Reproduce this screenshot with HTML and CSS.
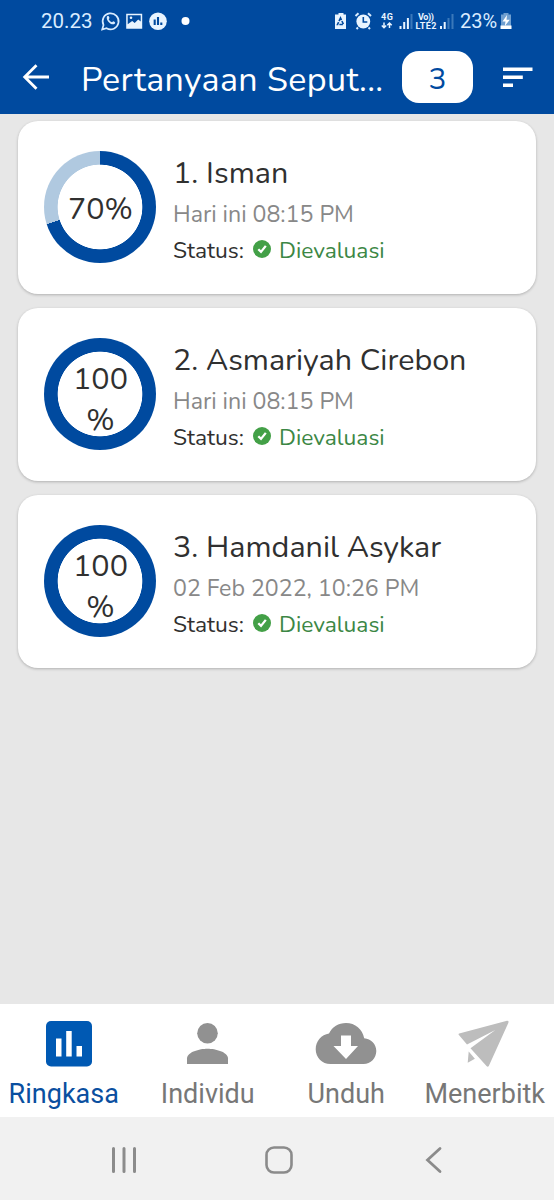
FILE: index.html
```html
<!DOCTYPE html>
<html lang="id">
<head>
<meta charset="utf-8">
<title>Pertanyaan</title>
<link rel="stylesheet" href="styles.css">
</head>
<body>
<div class="screen">
  <header class="header">
    <div class="status-bar">
      <span class="clock">20.23</span>
      <svg class="status-left" width="92" height="24" viewBox="0 0 92 24" fill="none">
        <path d="M2.200 20.500 3.500 16A8 8 0 1 1 6.500 19.200Z" stroke="#d9ecff" stroke-width="1.700"/>
        <path d="M7 7.500c1-1.200 1.800-.7 2.500 1.500l-.8 1.200c.8 1.500 1.900 2.500 3.300 3.100l1.200-1c2 .8 2.500 1.400 1.500 2.500-2.800 2.300-9.300-3-7.700-7.300Z" fill="#d9ecff"/>
        <path fill-rule="evenodd" d="M26.200 4.700h16v15h-16Zm1.500 1.500v9l4.500-3.200 2.500 2 3.500-3.500 2.500 2V6.200Z" fill="#e8f4ff"/><circle cx="31" cy="8.700" r="1.300" fill="#e8f4ff"/>
        <circle cx="58" cy="12.200" r="8.800" fill="#e8f4ff"/>
        <path d="M54.700 10.500v5.500M58 8v8M61.300 13.500v2.500" stroke="#004a9f" stroke-width="2.100"/>
        <circle cx="85.500" cy="12" r="4" fill="#fff"/>
      </svg>
      <svg class="status-right" width="126" height="24" viewBox="0 0 126 24" fill="none">
        <path fill="#e8f4ff" d="M5.500 4h5v1.500H13V20H2V5.500h3.500z"/>
        <path d="m7.500 9-3 6.500h6Z" stroke="#004a9f" stroke-width="1.600" stroke-dasharray="3.500 1"/>
        <path d="m22.500 7 3-2.800m9.500 0L38 7M25 18.500 23.500 20m12-1.500L37 20" stroke="#d9ecff" stroke-width="2"/>
        <circle cx="30.300" cy="12.500" r="6.900" fill="#e8f4ff"/><path d="M30.300 8v5h4" stroke="#004a9f" stroke-width="1.600"/>
        <text class="tiny" x="48" y="11" textLength="12">4G</text>
        <path d="M51 13.500v5m-2.200-2 2.200 2.200 2.200-2.200M56.500 19v-5m-2.200 2.300 2.200-2.300 2.200 2.300" stroke="#e8f4ff" stroke-width="1.500"/>
        <path d="M67.500 17v3M71.200 13v7M74.900 9v11" stroke="#e8f4ff" stroke-width="2"/><path d="M78.500 5v15" stroke="#3a78ba" stroke-width="2"/>
        <text class="tiny" x="85" y="11" textLength="16">Vo))</text><text class="tiny" x="82.500" y="20" textLength="21">LTE2</text>
        <path d="M108 17v3M111.700 13v7" stroke="#e8f4ff" stroke-width="2"/><path d="M115.500 9v11M119.500 5v15" stroke="#3a78ba" stroke-width="2"/>
      </svg>
      <span class="charge">23%</span>
      <svg class="battery" width="12" height="18" viewBox="0 0 12 18"><path fill="#6f9fd0" d="M3.500 1h5v1.500H11V17H1V2.500h2.500z"/><path fill="#fff" d="M.5 13.500h11V17H.5zM7 3 2.500 9.500h3L4.800 14l5-6.300H6.500z"/></svg>
    </div>
    <div class="toolbar">
      <svg class="back" width="28" height="28" viewBox="0 0 28 28" fill="none" stroke="#fff" stroke-width="2.800"><path d="M27 14H3M14.500 2.200 2.700 14l11.800 11.800"/></svg>
      <h1 class="title">Pertanyaan Seput...</h1>
      <span class="count">3</span>
      <svg class="sort" width="30" height="22" viewBox="0 0 30 22"><path fill="#fff" d="M0 1.500h29.500v3.500H0zM0 9.500h19.800v3.500H0zM0 17.500h10v3.500H0z"/></svg>
    </div>
  </header>

  <main class="list">
    <article class="card">
      <div class="ring ring-partial"><span class="percent">70%</span></div>
      <div class="details">
        <h2 class="name">1. Isman</h2>
        <p class="date">Hari ini 08:15 PM</p>
        <p class="status"><span class="status-label">Status:</span><svg class="check" width="18" height="18" viewBox="0 0 18 18"><circle cx="9" cy="9" r="9" fill="#43a047"/><path d="m5.300 9.200 2.700 2.700 4.800-6" fill="none" stroke="#fff" stroke-width="2.300"/></svg><span class="status-value">Dievaluasi</span></p>
      </div>
    </article>
    <article class="card">
      <div class="ring"><span class="percent">100<br>%</span></div>
      <div class="details">
        <h2 class="name">2. Asmariyah Cirebon</h2>
        <p class="date">Hari ini 08:15 PM</p>
        <p class="status"><span class="status-label">Status:</span><svg class="check" width="18" height="18" viewBox="0 0 18 18"><circle cx="9" cy="9" r="9" fill="#43a047"/><path d="m5.300 9.200 2.700 2.700 4.800-6" fill="none" stroke="#fff" stroke-width="2.300"/></svg><span class="status-value">Dievaluasi</span></p>
      </div>
    </article>
    <article class="card">
      <div class="ring"><span class="percent">100<br>%</span></div>
      <div class="details">
        <h2 class="name">3. Hamdanil Asykar</h2>
        <p class="date">02 Feb 2022, 10:26 PM</p>
        <p class="status"><span class="status-label">Status:</span><svg class="check" width="18" height="18" viewBox="0 0 18 18"><circle cx="9" cy="9" r="9" fill="#43a047"/><path d="m5.300 9.200 2.700 2.700 4.800-6" fill="none" stroke="#fff" stroke-width="2.300"/></svg><span class="status-value">Dievaluasi</span></p>
      </div>
    </article>
  </main>

  <nav class="tabs">
    <a class="tab active">
      <svg width="62" height="48" viewBox="0 0 62 48"><rect x="8" y="1" width="46" height="45.500" rx="5" fill="#0059b3"/><path fill="#fff" d="M18 18.500h5.500V36.500H18zM28.200 11h5.500v25.500h-5.500zM38.500 26H44v10.500h-5.500z"/></svg>
      <span>Ringkasa</span>
    </a>
    <a class="tab">
      <svg width="62" height="48" viewBox="0 0 62 48" fill="#919191"><circle cx="30.500" cy="13.200" r="10.300"/><path d="M10 44v-5.500C10 32 22.500 28.700 30.500 28.700S51 32 51 38.500V44z"/></svg>
      <span>Individu</span>
    </a>
    <a class="tab">
      <svg width="62" height="48" viewBox="0 0 62 48"><path fill="#919191" d="M15.500 44C7 44 .7 37.500.7 29.200.7 21.200 6.500 14.500 14 13.500 17.200 7 23.500 3 31 3c9.200 0 16.500 6.300 18.200 15.200C56 18.800 61.300 24 61.300 31S55.800 44 48.500 44Z"/><path fill="#fff" d="M26 15.500h10V26h7L31 39 18.500 26H26z"/></svg>
      <span>Unduh</span>
    </a>
    <a class="tab">
      <svg width="62" height="48" viewBox="0 0 62 48" fill="#bdbdbd"><path d="M4.700 14.800Q4 13.700 5.200 13.400L53 .8q2.300-.2 1.400 2L34.800 46q-1 1.500-2.300 0L16.500 28.300 41.300 10 13 24.500z"/><path d="m14.700 31.500 6.200 7.200-7.200 4z"/></svg>
      <span>Menerbitk</span>
    </a>
  </nav>

  <div class="system-nav">
    <svg width="28" height="28" viewBox="0 0 28 28" stroke="#8b8b8b" stroke-width="3" stroke-linecap="round"><path d="M3.500 2.500v23M14 2.500v23M24.500 2.500v23"/></svg>
    <svg width="28" height="28" viewBox="0 0 28 28" fill="none" stroke="#8b8b8b" stroke-width="2.600"><rect x="1.500" y="1.500" width="25" height="25" rx="7.500"/></svg>
    <svg width="28" height="28" viewBox="0 0 28 28" fill="none" stroke="#8b8b8b" stroke-width="2.800" stroke-linecap="round"><path d="M20 2.500 7.500 14 20 25.500"/></svg>
  </div>
</div>
</body>
</html>
```
FILE: styles.css
```css
* { box-sizing: border-box; }
body { margin: 0; }
h1, h2, p { margin: 0; font-weight: inherit; }
svg { display: block; flex: none; }

.screen {
  display: flex;
  flex-direction: column;
  width: 554px;
  height: 1200px;
  overflow: hidden;
  background: #e7e7e7;
  font-family: Nunito, "Open Sans", sans-serif;
  font-weight: 400;
  white-space: nowrap;
}

.header { height: 114px; background: #004a9f; color: #fff; flex: none; }
.status-bar {
  display: flex;
  align-items: center;
  height: 42px;
  padding-left: 41px;
  font: 20.500px/42px Roboto, sans-serif;
  color: #d9ecff;
}
.clock { width: 59px; }
.status-right { margin-left: 141px; }
.charge { width: 41px; padding-left: 1px; font-size: 20px; }
.tiny { font: 700 9px Roboto, sans-serif; fill: #e8f4ff; }

.toolbar { display: flex; align-items: center; height: 70px; padding-left: 22px; }
.title { width: 320px; padding: 6px 0 0 31px; font-size: 34px; line-height: 64px; letter-spacing: .35px; }
.count {
  width: 71px;
  height: 52px;
  margin-left: 32px;
  border-radius: 17px;
  background: #fff;
  color: #004a9f;
  font-size: 30px;
  line-height: 57px;
  text-align: center;
}
.sort { margin-left: 30px; }

.list { display: flex; flex-direction: column; gap: 14px; flex: 1; padding: 7px 18px; }
.card {
  display: flex;
  height: 173px;
  padding: 30px 0 0 26px;
  border-radius: 20px;
  background: #fff;
  box-shadow: 0 1px 3px rgba(0, 0, 0, .24);
}
.ring {
  display: flex;
  justify-content: center;
  width: 112px;
  height: 112px;
  padding: 21px 0 0 1px;
  border-radius: 50%;
  background: radial-gradient(circle, #fff 42px, #004a9f 42.700px);
}
.ring-partial {
  padding-top: 38px;
  background: radial-gradient(circle, #fff 42px, transparent 42.700px), conic-gradient(#004a9f 0 70%, #b0c9e0 70%);
}
.percent { font-size: 30.500px; line-height: 41px; text-align: center; color: #303030; }
.details { padding-left: 17px; color: #303030; }
.name { font-size: 30.500px; line-height: 45px; }
.date { font-size: 23.200px; line-height: 38px; color: #888; }
.status { display: flex; align-items: center; height: 34px; font-size: 22.800px; line-height: 34px; }
.status-label { width: 80px; }
.check { margin-bottom: 4px; }
.status-value { padding-left: 8px; color: #3c8745; }

.tabs { display: grid; grid-template-columns: repeat(4, 1fr); height: 113px; flex: none; background: #fff; }
.tab {
  display: flex;
  flex-direction: column;
  align-items: center;
  padding-top: 16px;
  font: 27px/32px Roboto, sans-serif;
  color: #777;
}
.tab span { padding-top: 10px; }
.active { color: #0a4fa0; }
.active span { margin-right: 11px; }

.system-nav { display: flex; align-items: center; justify-content: center; gap: 127px; height: 83px; padding: 3px 0 0 3px; background: #f1f1f1; flex: none; }
```
